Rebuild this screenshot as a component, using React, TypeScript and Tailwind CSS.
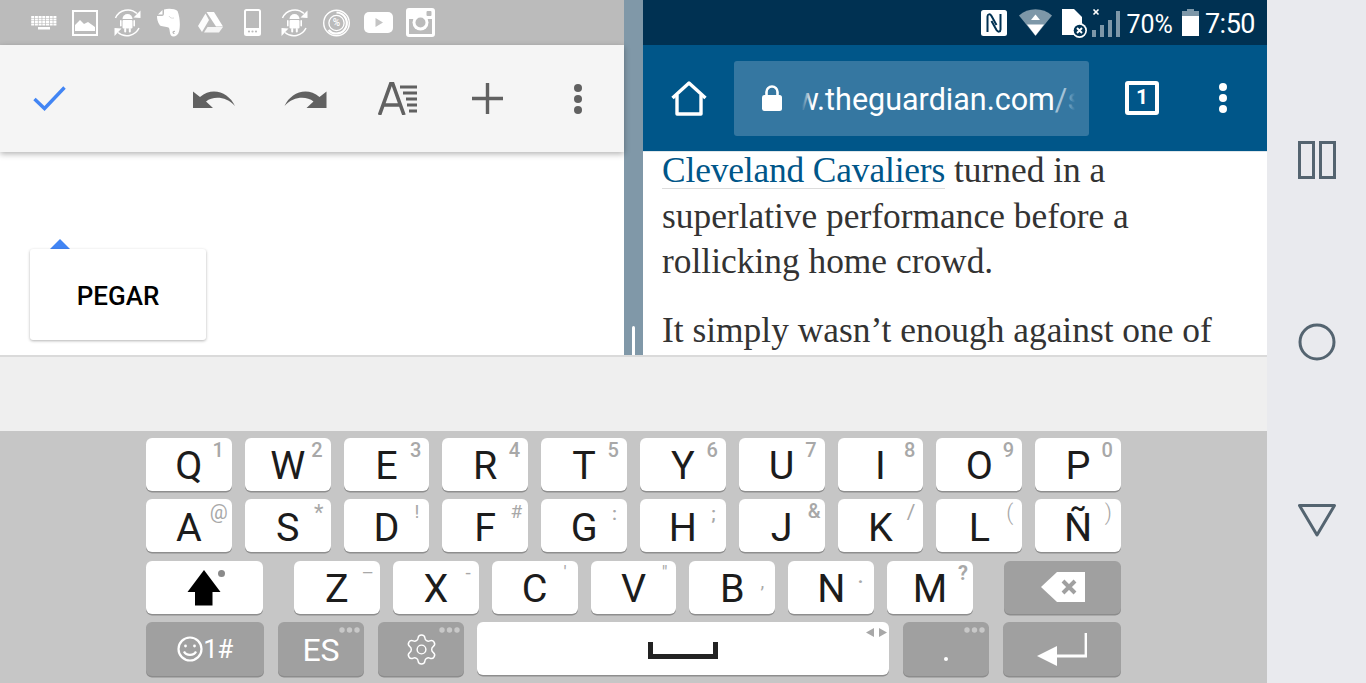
import React from "react";
import { Settings } from "lucide-react";

const W = "#ffffff";

function AndroidSync({ className = "" }: { className?: string }) {
  return (
    <svg width="27" height="28" viewBox="0 0 27 28" className={className} fill="none">
      <path d="M1.5 9 A13.5 13.5 0 0 1 23 4.5" stroke={W} strokeWidth="1.5" />
      <path d="M26.5 1.5 L26.5 9 L19.5 8.5 Z" fill={W} />
      <path d="M25 19 A13.5 13.5 0 0 1 4 23.5" stroke={W} strokeWidth="1.5" />
      <path d="M0.5 27 L0.5 19 L7.5 19.5 Z" fill={W} />
      <path d="M8.5 10 A4.8 4.8 0 0 1 18.5 10 Z" fill={W} />
      <rect x="8.5" y="11" width="10" height="8.5" rx="1" fill={W} />
      <rect x="6" y="11" width="1.6" height="6.5" rx="0.8" fill={W} />
      <rect x="19.4" y="11" width="1.6" height="6.5" rx="0.8" fill={W} />
      <rect x="10.2" y="19" width="2" height="4.5" rx="1" fill={W} />
      <rect x="14.8" y="19" width="2" height="4.5" rx="1" fill={W} />
    </svg>
  );
}

function StatusLeft() {
  return (
    <div className="h-[45px] bg-[#bbbbbb] flex items-center shrink-0">
      <svg width="26" height="14" viewBox="0 0 26 14" className="ml-[31px]" fill={W}>
        {[0, 1, 2, 3].map((r) =>
          [0, 1, 2, 3, 4, 5, 6].map((c) => (
            <rect key={`${r}-${c}`} x={c * 3.7 + 0.2} y={r * 2.5} width="3" height="2" />
          ))
        )}
        <rect x="7" y="11" width="12" height="2.5" />
      </svg>
      <svg width="26" height="26" viewBox="0 0 26 26" className="ml-[15px]" fill="none">
        <rect x="1" y="1" width="24" height="24" stroke={W} strokeWidth="2" />
        <path d="M3 21 V15 L8 10 L12 14 L16 12 L23 17 V21 Z" fill={W} />
      </svg>
      <AndroidSync className="ml-[16px]" />
      <svg width="24" height="29" viewBox="0 0 24 29" className="ml-[16px]" fill={W}>
        <path d="M7 1.5 C11 0 18 0.5 20.5 3 C23 9 23.5 18 22 23.5 C21 28 16 30 14 27.5 C12.5 25.5 13 22 12 20 C11 18.5 6 19 3 17.5 C0.5 14 0 11 0 8 H5 C6.5 8 7 7 7 5 Z" />
        <path d="M5.5 2 V6.5 H1 Z" />
        <path d="M17.5 25.5 C15.5 25.5 15.5 23 18 23.5" fill="none" stroke="#bbbbbb" strokeWidth="1.2" />
        <path d="M12 8 C13 10 15 10.5 17 10" fill="none" stroke="#dddddd" strokeWidth="1" />
      </svg>
      <svg width="25" height="21" viewBox="0 0 25 21" className="ml-[17px]" fill={W}>
        <path d="M8.5 0 H16 L25 14.5 H18 Z" />
        <path d="M7.5 1.5 L11 8 L4 20 L0 14 Z" opacity="0.95" />
        <path d="M6 20.5 L9.5 15 H25 L21 20.5 Z" opacity="0.85" />
      </svg>
      <svg width="17" height="27" viewBox="0 0 17 27" className="ml-[21px]" fill="none">
        <rect x="1" y="1" width="15" height="25" rx="1.5" stroke={W} strokeWidth="2" />
        <rect x="1" y="19" width="15" height="7" fill={W} />
        <circle cx="5" cy="22.5" r="1.1" fill="#bbbbbb" />
        <circle cx="8.5" cy="22.5" r="1.1" fill="#bbbbbb" />
        <circle cx="12" cy="22.5" r="1.1" fill="#bbbbbb" />
      </svg>
      <AndroidSync className="ml-[20px]" />
      <div className="ml-[15px] relative w-[27px] h-[28px]">
        <svg width="27" height="28" viewBox="0 0 27 28" fill="none" className="block">
          <circle cx="13.5" cy="14" r="12.8" stroke={W} strokeWidth="1.4" />
          <path d="M13.5 3.5 A10.5 10.5 0 1 1 5.5 21" stroke={W} strokeWidth="2.2" />
          <circle cx="13.5" cy="14" r="7.6" stroke={W} strokeWidth="1.3" />
        </svg>
        <span className="absolute inset-0 flex items-center justify-center text-[10px] font-medium text-white font-['Roboto',sans-serif]">%</span>
      </div>
      <svg width="29" height="21" viewBox="0 0 29 21" className="ml-[14px]">
        <rect width="29" height="21" rx="5" fill={W} />
        <path d="M11.5 6 L19 10.5 L11.5 15 Z" fill="#c4c4c4" />
      </svg>
      <svg width="29" height="29" viewBox="0 0 29 29" className="ml-[13px]">
        <rect width="29" height="29" rx="3" fill={W} />
        <rect x="3" y="11" width="23" height="15" fill="#bbbbbb" />
        <circle cx="14.5" cy="14.5" r="8" fill={W} />
        <circle cx="14.5" cy="14.5" r="5" fill="#bbbbbb" />
        <rect x="20.5" y="3" width="5" height="5" rx="1" fill="#bbbbbb" />
      </svg>
    </div>
  );
}

function StatusRight() {
  return (
    <div className="h-[45px] bg-[#003152] flex items-center justify-end pr-[12px] shrink-0 text-white font-['Roboto',sans-serif]">
      <svg width="26" height="26" viewBox="0 0 26 26">
        <rect width="26" height="26" rx="2.5" fill={W} />
        <path d="M6.5 22 V6.5 C6.5 4 9 3.5 10.5 6 L15.5 15 M19.5 4 V19.5 C19.5 22 17 22.5 15.5 20 L10.5 11" fill="none" stroke="#003152" strokeWidth="2" />
      </svg>
      <svg width="33" height="27" viewBox="0 0 33 27" className="ml-[12px]">
        <path d="M0 6.5 C9 -2 24 -2 33 6.5 L16.5 27 Z" fill="#7d97a8" />
        <path d="M16.5 5.5 L21 11 H12 Z" fill={W} />
        <path d="M8 15.5 H25 L16.5 26.5 Z" fill={W} />
      </svg>
      <svg width="25" height="30" viewBox="0 0 25 30" className="ml-[10px]">
        <path d="M0 1 H12 L20 9 V27 H0 Z" fill={W} />
        <circle cx="17.5" cy="22.5" r="7.5" fill={W} />
        <circle cx="17.5" cy="22.5" r="5.8" fill="#003152" />
        <path d="M15 20 L20 25 M20 20 L15 25" stroke={W} strokeWidth="1.9" />
      </svg>
      <svg width="28" height="28" viewBox="0 0 28 28" className="ml-[5px]" fill="#7d97a8">
        <path d="M1.5 0.5 L6.5 5.5 M6.5 0.5 L1.5 5.5" stroke={W} strokeWidth="1.6" />
        <rect x="0" y="21" width="4" height="7" />
        <rect x="8" y="16" width="4" height="12" />
        <rect x="16" y="11" width="4" height="17" />
        <rect x="24" y="2" width="4" height="26" />
      </svg>
      <span className="ml-[7px] pt-[4px] text-[25px] leading-none">70%</span>
      <svg width="17" height="27" viewBox="0 0 17 27" className="ml-[9px]">
        <rect x="5" y="0" width="7" height="3" fill="#7d97a8" />
        <rect x="0" y="2" width="17" height="5" fill="#7d97a8" />
        <rect x="0" y="7" width="17" height="20" fill={W} />
      </svg>
      <span className="ml-[6px] pt-[4px] text-[27px] leading-none tracking-[-0.5px]">7:50</span>
    </div>
  );
}

function Dots({ color }: { color: string }) {
  return (
    <svg width="8" height="30" viewBox="0 0 8 30" fill={color}>
      <circle cx="4" cy="4" r="4" />
      <circle cx="4" cy="15" r="4" />
      <circle cx="4" cy="26" r="4" />
    </svg>
  );
}

function ToolbarLeft() {
  const g = "#616161";
  return (
    <div className="relative z-10 h-[107px] bg-[#f5f5f5] flex items-center shrink-0 shadow-[0_2px_6px_rgba(0,0,0,0.3)]">
      <svg width="33" height="25" viewBox="0 0 33 25" className="ml-[33px]" fill="none">
        <path d="M1.5 13 L11.5 22.5 L31.5 1.5" stroke="#4285f4" strokeWidth="3.4" />
      </svg>
      <svg width="42" height="19" viewBox="0 0 42 19" className="ml-[127px]" fill={g}>
        <path d="M0 2.5 V19 H20 L13 12.5 C20 7 33 7 42 17 C36 4 20 -3 7 8 Z" />
      </svg>
      <svg width="43" height="19" viewBox="0 0 42 19" className="ml-[49px] -scale-x-100" fill={g}>
        <path d="M0 2.5 V19 H20 L13 12.5 C20 7 33 7 42 17 C36 4 20 -3 7 8 Z" />
      </svg>
      <svg width="40" height="33" viewBox="0 0 40 33" className="ml-[51px]" fill="none" stroke={g}>
        <path d="M1.5 33 L13 1 H14.5 L26 33 M5 23 H22" strokeWidth="3.6" />
        <path d="M22 5 H39 M25 11 H39 M28 17 H39 M29 23 H39 M31 29 H39" strokeWidth="3.2" />
      </svg>
      <svg width="31" height="31" viewBox="0 0 31 31" className="ml-[54px]" fill="none" stroke={g} strokeWidth="3.4">
        <path d="M15.5 0 V31 M0 15.5 H31" />
      </svg>
      <div className="ml-[71px] flex">
        <Dots color={g} />
      </div>
    </div>
  );
}

function ToolbarRight() {
  return (
    <div className="relative z-10 h-[107px] bg-[#005689] flex items-center shrink-0 border-b border-[#dfe6ea]">
      <svg width="36" height="35" viewBox="0 0 36 35" className="ml-[28px]" fill="none" stroke={W} strokeWidth="3.4" strokeLinejoin="round">
        <path d="M1.5 17 L18 2 L34.5 17" />
        <path d="M6 14 V33 H30 V14" />
      </svg>
      <div className="ml-[27px] w-[355px] h-[75px] rounded-[3px] bg-[#3577a1] flex items-center text-white">
        <svg width="20" height="26" viewBox="0 0 20 26" className="ml-[28px] shrink-0" fill={W}>
          <path d="M4.5 11 V7 A5.5 5.5 0 0 1 15.5 7 V11" fill="none" stroke={W} strokeWidth="2.6" />
          <rect y="10" width="20" height="16" rx="2.5" />
        </svg>
        <div className="ml-[20px] w-[273px] relative overflow-hidden pt-[3px]">
          <div className="whitespace-nowrap text-[30.5px] leading-[38px] font-['Roboto',sans-serif] -ml-[6px]">
            w.theguardian.com<span className="text-[#a4c3d8]">/s</span>
          </div>
          <div className="absolute inset-y-0 left-0 w-[10px] bg-gradient-to-r from-[#3577a1] to-transparent" />
          <div className="absolute inset-y-0 right-0 w-[10px] bg-gradient-to-l from-[#3577a1] to-transparent" />
        </div>
      </div>
      <div className="ml-[36px] w-[34px] h-[34px] border-[4px] border-white rounded-[3px] flex items-center justify-center text-white text-[21px] font-bold font-['Roboto',sans-serif]">
        1
      </div>
      <div className="ml-[60px] flex">
        <Dots color={W} />
      </div>
    </div>
  );
}

function Key({ label, hint, hintClass = "", className = "flex-1" }: { label: string; hint?: string; hintClass?: string; className?: string }) {
  return (
    <div className={`relative h-[53px] bg-white rounded-[6px] shadow-[0_1.5px_0_#8e8e8e] flex items-center justify-center pt-[3px] text-[39.5px] leading-none text-[#1c1c1c] ${className}`}>
      {label}
      {hint && <span className={`absolute text-[#a8a8a8] leading-none ${hintClass || "right-[8px] top-[2px] text-[20px] font-medium"}`}>{hint}</span>}
    </div>
  );
}

function MoreDots() {
  return (
    <svg width="21" height="6" viewBox="0 0 21 6" fill="#c8c8c8" className="absolute top-[5px] right-[4px]">
      <circle cx="3" cy="3" r="2.7" />
      <circle cx="10.5" cy="3" r="2.7" />
      <circle cx="18" cy="3" r="2.7" />
    </svg>
  );
}

function DarkKey({ className, children }: { className: string; children?: React.ReactNode }) {
  return (
    <div className={`relative h-[54px] bg-[#a0a0a0] rounded-[6px] shadow-[0_1.5px_0_#8c8c8c] flex items-center justify-center text-white ${className}`}>
      {children}
    </div>
  );
}

function Keyboard() {
  return (
    <div className="flex-1 bg-[#c6c6c6] px-[146px] pt-[7px] flex flex-col gap-[8.3px] font-['Roboto',sans-serif]">
      <div className="flex gap-[13px]">
        {["Q1", "W2", "E3", "R4", "T5", "Y6", "U7", "I8", "O9", "P0"].map((k) => (
          <Key key={k} label={k[0]} hint={k[1]} />
        ))}
      </div>
      <div className="flex gap-[13px]">
        <Key label="A" hint="@" hintClass="right-[4px] top-[3px] text-[20px]" />
        <Key label="S" hint="*" hintClass="right-[7px] top-[3px] text-[22px]" />
        <Key label="D" hint="!" hintClass="right-[10px] top-[3px] text-[19px]" />
        <Key label="F" hint="#" hintClass="right-[6px] top-[3px] text-[19px]" />
        <Key label="G" hint=":" hintClass="right-[10px] top-[5px] text-[19px] font-medium" />
        <Key label="H" hint=";" hintClass="right-[10px] top-[5px] text-[19px] font-medium" />
        <Key label="J" hint="&" hintClass="right-[4px] top-[2px] text-[20px] font-medium" />
        <Key label="K" hint="/" hintClass="right-[8px] top-[3px] text-[21px]" />
        <Key label="L" hint="(" hintClass="right-[9px] top-[3px] text-[22px] font-light" />
        <Key label="Ñ" hint=")" hintClass="right-[9px] top-[3px] text-[22px] font-light" />
      </div>
      <div className="flex gap-[13px]">
        <div className="relative h-[53px] w-[117px] mr-[18px] bg-white rounded-[6px] shadow-[0_1.5px_0_#8e8e8e] flex items-center justify-center">
          <svg width="34" height="36" viewBox="0 0 34 36" className="mt-[2px] -ml-[2px]" fill="#000">
            <path d="M17 0 L33.5 22 H25.5 V35.5 H8 V22 H0.5 Z" />
          </svg>
          <span className="absolute left-[72px] top-[9px] w-[7px] h-[7px] rounded-full bg-[#8a8a8a]" />
        </div>
        <Key label="Z" hint="–" hintClass="right-[6px] top-[2px] text-[19px]" />
        <Key label="X" hint="-" hintClass="right-[8px] top-[2px] text-[19px]" />
        <Key label="C" hint="'" hintClass="right-[11px] top-[3px] text-[18px]" />
        <Key label="V" hint={'"'} hintClass="right-[9px] top-[3px] text-[18px]" />
        <Key label="B" hint="," hintClass="right-[11px] top-[11px] text-[19px]" />
        <Key label="N" hint="." hintClass="right-[11px] top-[6px] text-[19px] font-bold" />
        <Key label="M" hint="?" hintClass="right-[5px] top-[2px] text-[20px] font-bold" />
        <div className="relative h-[53px] w-[117px] ml-[18px] bg-[#a0a0a0] rounded-[6px] shadow-[0_1.5px_0_#8c8c8c] flex items-center justify-center">
          <svg width="44" height="30" viewBox="0 0 44 30">
            <path d="M44 0 V30 H16 L0 15 L16 0 Z" fill={W} />
            <path d="M22 9 L34 21 M34 9 L22 21" stroke="#a0a0a0" strokeWidth="4" />
          </svg>
        </div>
      </div>
      <div className="flex">
        <DarkKey className="w-[118px]">
          <svg width="26" height="26" viewBox="0 0 26 26" fill="none" stroke={W} strokeWidth="2.2">
            <circle cx="13" cy="13" r="11.5" />
            <circle cx="8.5" cy="10" r="1.4" fill={W} stroke="none" />
            <circle cx="17.5" cy="10" r="1.4" fill={W} stroke="none" />
            <path d="M7 15.5 C9 20 17 20 19 15.5" />
          </svg>
          <span className="text-[26px] leading-none tracking-[-0.5px]">1#</span>
        </DarkKey>
        <DarkKey className="w-[86px] ml-[14px] text-[32px] leading-none pt-[3px]">
          ES
          <MoreDots />
        </DarkKey>
        <DarkKey className="w-[86px] ml-[14px]">
          <Settings size={35} strokeWidth={1} className="mt-[2px]" />
          <MoreDots />
        </DarkKey>
        <div className="relative h-[53px] w-[412px] ml-[13px] bg-white rounded-[6px] shadow-[0_1.5px_0_#8e8e8e] flex items-center justify-center">
          <svg width="70" height="17" viewBox="0 0 70 17" className="mt-[5px]" fill="none">
            <path d="M2.5 0 V14.5 H67.5 V0" stroke="#222" strokeWidth="5" />
          </svg>
          <svg width="21" height="9" viewBox="0 0 21 9" fill="#a8a8a8" className="absolute right-[2px] top-[6px]">
            <path d="M8 0 V9 L0 4.5 Z M13 0 L21 4.5 L13 9 Z" />
          </svg>
        </div>
        <DarkKey className="w-[86px] ml-[14px]">
          <span className="absolute left-[41px] top-[35px] w-[4px] h-[4px] rounded-full bg-white" />
          <MoreDots />
        </DarkKey>
        <DarkKey className="w-[118px] ml-[14px]">
          <svg width="50" height="33" viewBox="0 0 50 33" className="mt-[1px]" fill="none">
            <path d="M49 0 V23 H18" stroke={W} strokeWidth="2.8" />
            <path d="M20 13 V33 L0 23 Z" fill={W} />
          </svg>
        </DarkKey>
      </div>
    </div>
  );
}

export default function App() {
  return (
    <div className="w-[1366px] h-[683px] flex overflow-hidden font-['Roboto',sans-serif]">
      <div className="w-[1267px] flex flex-col">
        <div className="h-[355px] flex shrink-0">
          <div className="w-[624px] bg-white flex flex-col relative">
            <StatusLeft />
            <ToolbarLeft />
            <div className="absolute left-[50px] top-[239px] w-0 h-0 border-l-[10.5px] border-r-[10.5px] border-b-[10px] border-l-transparent border-r-transparent border-b-[#4285f4]" />
            <div className="absolute left-[30px] top-[249px] w-[176px] h-[91px] bg-white rounded-[3px] shadow-[0_1px_3px_rgba(0,0,0,0.3)] flex items-center justify-center pt-[3px] text-[26px] font-medium text-black">
              PEGAR
            </div>
          </div>
          <div className="relative w-[19px] bg-[#8098a8]">
            <div className="absolute left-[8px] bottom-0 w-[3px] h-[29px] bg-white rounded-t-[2px]" />
          </div>
          <div className="w-[624px] flex flex-col bg-white overflow-hidden">
            <StatusRight />
            <ToolbarRight />
            <div className="pl-[19px] -mt-[4px] text-[35.4px] leading-[45.5px] text-[#333333] font-['Liberation_Serif',serif] whitespace-nowrap">
              <p>
                <span className="text-[#005689] border-b border-[#dcdcdc] inline-block leading-[36px] h-[37px] tracking-[-0.15px]">Cleveland Cavaliers</span> turned in a
              </p>
              <p>superlative performance before a</p>
              <p>rollicking home crowd.</p>
              <p className="mt-[23px]">It simply wasn’t enough against one of</p>
            </div>
          </div>
        </div>
        <div className="h-[76px] shrink-0 bg-[#efefef] border-t-2 border-[#dadada]" />
        <Keyboard />
      </div>
      <div className="w-[99px] bg-[#e9eaee] flex flex-col items-center">
        <svg width="38" height="38" viewBox="0 0 38 38" className="mt-[141px]" fill="none" stroke="#546470" strokeWidth="3">
          <rect x="1.5" y="1.5" width="14" height="35" />
          <rect x="22.5" y="1.5" width="14" height="35" />
        </svg>
        <svg width="38" height="38" viewBox="0 0 38 38" className="mt-[144px]" fill="none" stroke="#546470" strokeWidth="3">
          <circle cx="19" cy="19" r="17" />
        </svg>
        <svg width="38" height="33" viewBox="0 0 38 33" className="mt-[143px]" fill="none" stroke="#546470" strokeWidth="3" strokeLinejoin="round">
          <path d="M1.5 1.5 H36.5 L19 31 Z" />
        </svg>
      </div>
    </div>
  );
}
